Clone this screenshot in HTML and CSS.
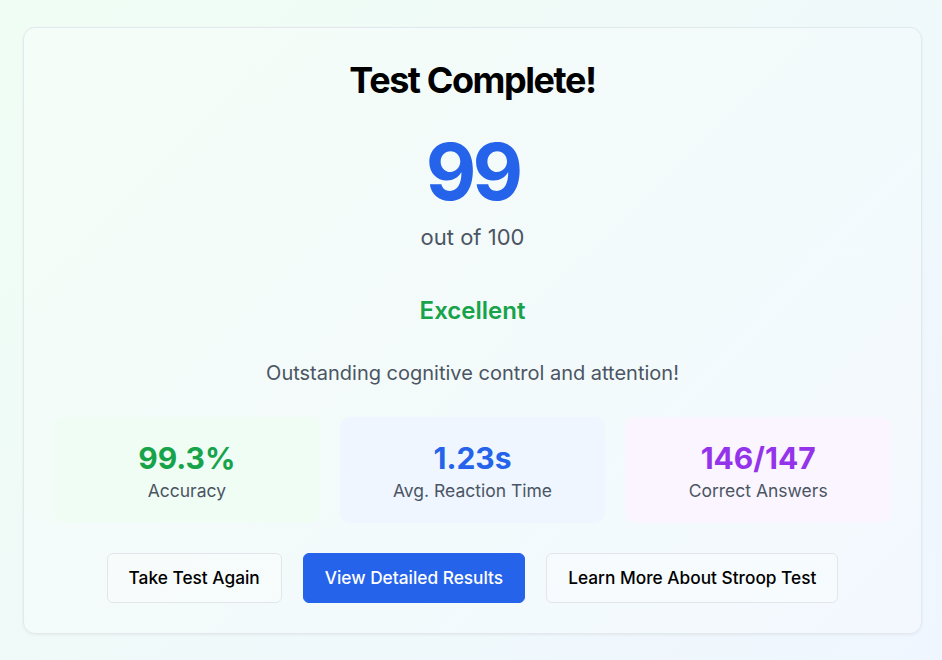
FILE: index.html
```html
<!DOCTYPE html>
<html lang="en">
<head>
<meta charset="utf-8">
<title>Test Complete</title>
<link rel="stylesheet" href="styles.css">
</head>
<body>
<main class="card">
  <h1 class="title">Test Complete!</h1>
  <div class="score">99</div>
  <div class="score-sub">out of 100</div>
  <div class="rating">Excellent</div>
  <p class="message">Outstanding cognitive control and attention!</p>
  <div class="stats">
    <div class="stat stat-green">
      <div class="stat-value">99.3%</div>
      <div class="stat-label">Accuracy</div>
    </div>
    <div class="stat stat-blue">
      <div class="stat-value">1.23s</div>
      <div class="stat-label">Avg. Reaction Time</div>
    </div>
    <div class="stat stat-purple">
      <div class="stat-value">146/147</div>
      <div class="stat-label">Correct Answers</div>
    </div>
  </div>
  <div class="actions">
    <button class="btn btn-outline">Take Test Again</button>
    <button class="btn btn-primary">View Detailed Results</button>
    <button class="btn btn-outline">Learn More About Stroop Test</button>
  </div>
</main>
</body>
</html>
```
FILE: styles.css
```css
* { box-sizing: border-box; }
html, body { margin: 0; height: 100%; }
body {
  font-family: Inter, "Noto Sans", sans-serif;
  background: linear-gradient(135deg, #f0fdf4 0%, #eff6ff 100%);
  padding: 27px 20px 0 23px;
}
.card {
  width: 899px;
  border: 1px solid #e3e8ec;
  border-radius: 12px;
  background: rgba(255, 255, 255, 0.25);
  box-shadow: 0 1px 3px rgba(0, 0, 0, 0.06);
  padding: 32px 30px 30px;
  display: flex;
  flex-direction: column;
  align-items: center;
  text-align: center;
}
.title {
  margin: 0;
  font-size: 36px;
  line-height: 40px;
  font-weight: 700;
  letter-spacing: -0.04em;
  color: #000;
}
.score {
  margin-top: 32px;
  font-size: 78px;
  line-height: 80px;
  font-weight: 700;
  color: #2563eb;
  letter-spacing: -0.05em;
}
.score-sub {
  margin-top: 11px;
  font-size: 22px;
  line-height: 28px;
  color: #4b5563;
}
.rating {
  margin-top: 44px;
  font-size: 24px;
  line-height: 32px;
  font-weight: 600;
  color: #16a34a;
}
.message {
  margin: 32px 0 0;
  font-size: 20px;
  line-height: 28px;
  color: #4b5563;
}
.stats {
  margin-top: 30px;
  width: 100%;
  display: grid;
  grid-template-columns: repeat(3, 1fr);
  gap: 20px;
}
.stat {
  border-radius: 10px;
  padding: 23px 16px 20px;
}
.stat-green { background: #f0fdf4; }
.stat-blue { background: #eff6ff; }
.stat-purple { background: #faf5ff; }
.stat-value {
  font-size: 30px;
  line-height: 36px;
  font-weight: 700;
}
.stat-green .stat-value { color: #16a34a; }
.stat-blue .stat-value { color: #2563eb; }
.stat-purple .stat-value { color: #9333ea; }
.stat-label {
  margin-top: 3px;
  font-size: 17.5px;
  line-height: 24px;
  color: #4b5563;
}
.actions {
  margin-top: 30px;
  display: flex;
  gap: 21px;
  justify-content: center;
}
.btn {
  font-family: inherit;
  font-size: 17.3px;
  font-weight: 500;
  line-height: 24px;
  height: 50px;
  padding: 0 21px;
  border-radius: 6px;
  cursor: pointer;
}
.btn-outline {
  background: rgba(255, 255, 255, 0.3);
  border: 1px solid #e2e6ea;
  color: #000;
}
.btn-primary {
  background: #2563eb;
  border: 1px solid #2563eb;
  color: #fff;
}
```
